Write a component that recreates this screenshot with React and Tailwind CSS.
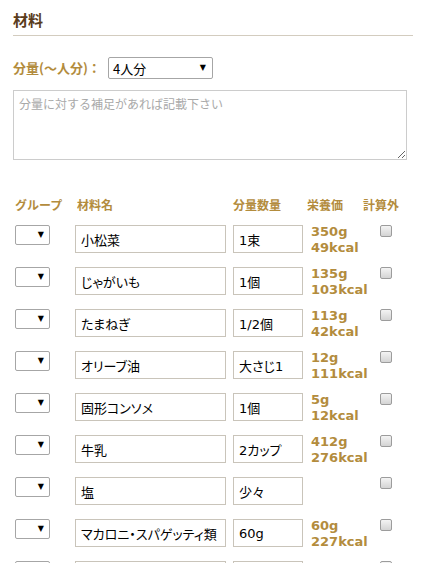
import React from "react";

const GOLD = "text-[#b38c3d]";

const rows = [
  { name: "小松菜", qty: "1束", g: "350g", k: "49kcal" },
  { name: "じゃがいも", qty: "1個", g: "135g", k: "103kcal" },
  { name: "たまねぎ", qty: "1/2個", g: "113g", k: "42kcal" },
  { name: "オリーブ油", qty: "大さじ1", g: "12g", k: "111kcal" },
  { name: "固形コンソメ", qty: "1個", g: "5g", k: "12kcal" },
  { name: "牛乳", qty: "2カップ", g: "412g", k: "276kcal" },
  { name: "塩", qty: "少々", g: "", k: "" },
  { name: "マカロニ・スパゲッティ類", qty: "60g", g: "60g", k: "227kcal" },
  { name: "", qty: "", g: "", k: "" },
];

function MiniSelect() {
  return (
    <div className="flex h-[20px] w-[35px] items-center justify-end rounded-[2px] border border-[#a6a6a6] bg-white pr-[5px]">
      <span className="text-[8px] leading-none text-black">▼</span>
    </div>
  );
}

function Checkbox() {
  return (
    <div className="h-[12px] w-[12px] rounded-[2px] border border-[#9c9c9c] bg-gradient-to-b from-[#f4f4f4] to-[#d4d4d4]" />
  );
}

export default function App() {
  return (
    <div className="min-h-screen bg-white pl-[13px] pr-[8px] font-['DejaVu_Sans','Noto_Sans_CJK_JP',sans-serif]">
      <div className="border-b border-[#d3ccbf] pt-[10px] pb-[5px]">
        <h2 className="font-['Noto_Sans_CJK_JP',sans-serif] text-[15px] font-bold leading-[20px] text-[#5a3c1c]">
          材料
        </h2>
      </div>

      <div className="mt-[21px] flex h-[22px] items-center">
        <span className={`font-['Noto_Sans_CJK_JP',sans-serif] text-[13px] font-bold leading-[22px] ${GOLD} w-[95px]`}>
          分量(〜人分)：
        </span>
        <div className="flex h-[22px] w-[105px] items-center justify-between rounded-[2px] border border-[#a6a6a6] bg-white pl-[4px] pr-[6px]">
          <span className="font-['Noto_Sans_CJK_JP',sans-serif] text-[13px] leading-none text-black">4人分</span>
          <span className="text-[8px] leading-none text-black">▼</span>
        </div>
      </div>

      <textarea
        className="mt-[11px] block h-[70px] w-[394px] border border-[#cccccc] bg-white px-[5px] py-[4px] font-['Noto_Sans_CJK_JP',sans-serif] text-[12px] leading-[18px] text-black placeholder:text-[#a9a9a9] outline-none"
        placeholder="分量に対する補足があれば記載下さい"
      />

      <div className={`mt-[37px] grid grid-cols-[62px_156px_74px_56px_auto] pl-[2px] font-['Noto_Sans_CJK_JP',sans-serif] text-[12px] font-bold leading-[16px] ${GOLD}`}>
        <span>グループ</span>
        <span>材料名</span>
        <span>分量数量</span>
        <span>栄養価</span>
        <span>計算外</span>
      </div>

      <div className="mt-[12px] flex flex-col gap-[14px] pl-[2px]">
        {rows.map((r, i) => (
          <div key={i} className="grid h-[28px] grid-cols-[60px_158px_78px_69px_auto] items-start">
            <MiniSelect />
            <input
              readOnly
              value={r.name}
              className="h-[28px] w-[151px] border border-[#c9c4ba] bg-white pl-[5px] font-['Noto_Sans_CJK_JP',sans-serif] text-[13px] text-black outline-none [font-feature-settings:'palt']"
            />
            <input
              readOnly
              value={r.qty}
              className="h-[28px] w-[70px] border border-[#c9c4ba] bg-white pl-[5px] font-['DejaVu_Sans','Noto_Sans_CJK_JP',sans-serif] text-[13px] text-black outline-none [font-feature-settings:'palt']"
            />
            <div className={`-mt-[1px] font-['DejaVu_Sans',sans-serif] text-[13px] font-bold leading-[16px] ${GOLD}`}>
              {r.g && <div>{r.g}</div>}
              {r.k && <div>{r.k}</div>}
            </div>
            <Checkbox />
          </div>
        ))}
      </div>
    </div>
  );
}
